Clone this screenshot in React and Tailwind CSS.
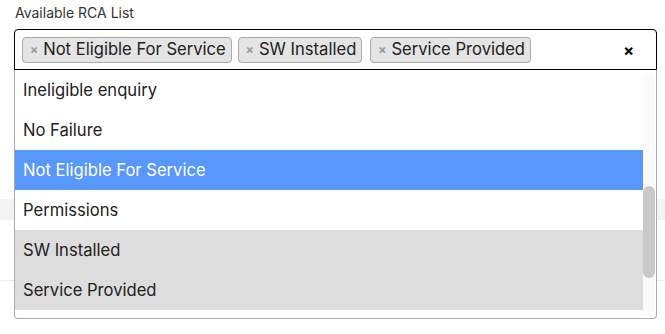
import React from "react";

const chips = ["Not Eligible For Service", "SW Installed", "Service Provided"];

const options = [
    { label: "Ineligible enquiry", state: "" },
    { label: "No Failure", state: "" },
    { label: "Not Eligible For Service", state: "active" },
    { label: "Permissions", state: "" },
    { label: "SW Installed", state: "selected" },
    { label: "Service Provided", state: "selected" },
];

const App = () => {
    return (
        <main className="relative w-[665px] h-[334px] overflow-hidden bg-white pl-[14px] pr-[8px] pt-[4px] font-['Inter',sans-serif] text-[#222]">
            <label className="block pl-px text-[14px] leading-[17px] text-[#333]">Available RCA List</label>

            <div className="relative mt-2 z-10">
                {/* Selected values */}
                <div className="flex h-[41px] items-center rounded-t-[4px] border border-black bg-white pl-[7px] pr-[22px]">
                    {chips.map((chip, index) => (
                        <span
                            key={chip}
                            className={`flex h-[26px] items-center gap-[5px] rounded-[4px] border border-[#aaa] bg-[#e4e4e4] pl-[7px] pr-[5px] text-[16.6px] leading-none text-[#222] ${
                                index === 0 ? "" : index === 1 ? "ml-[6px]" : "ml-[8px]"
                            }`}
                        >
                            <span className="text-[12px] font-bold text-[#999]">×</span>
                            {chip}
                        </span>
                    ))}
                    <span className="ml-auto text-[16px] font-bold leading-none text-black">×</span>
                </div>

                {/* Dropdown */}
                <div className="absolute left-0 right-0 top-full flex h-[249px] rounded-b-[4px] border border-t-0 border-[#aaa] bg-white">
                    <ul className="flex-1">
                        {options.map((option) => (
                            <li
                                key={option.label}
                                className={`flex h-[40px] items-center px-[8px] text-[16.6px] ${
                                    option.state === "active"
                                        ? "bg-[#5897fb] text-white"
                                        : option.state === "selected"
                                        ? "bg-[#ddd] text-[#222]"
                                        : "bg-white text-[#222]"
                                }`}
                            >
                                {option.label}
                            </li>
                        ))}
                    </ul>
                    <div className="w-[13px] py-[2px] pr-px">
                        <div className="h-full rounded-full bg-[#fafafa] pt-[114px]">
                            <div className="h-[92px] rounded-full bg-[#c9c9c9]"></div>
                        </div>
                    </div>
                </div>
            </div>

            {/* Page content behind the dropdown */}
            <div className="-ml-[14px] -mr-[8px] mt-[129px] h-[21px] bg-[#f3f3f6]"></div>
            <div className="-ml-[14px] -mr-[8px] mt-[60px] border-t border-[#ececec]"></div>
        </main>
    );
};

export default App;
